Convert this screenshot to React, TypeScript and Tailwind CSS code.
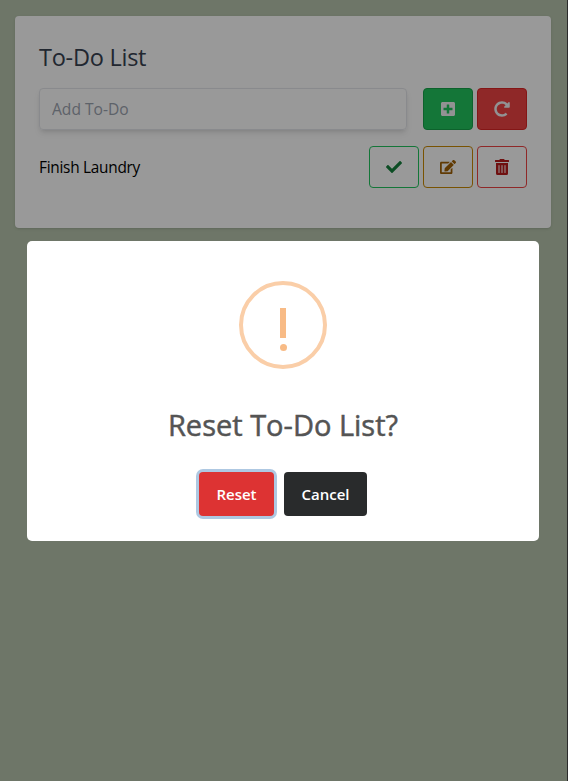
import React from "react";
import { FaPlusSquare, FaCheck, FaEdit, FaRedoAlt, FaTrashAlt } from "react-icons/fa";

function IconButton({ className, children }: { className: string; children: React.ReactNode }) {
  return (
    <button className={`flex h-[42px] w-[50px] shrink-0 items-center justify-center rounded border ${className}`}>
      {children}
    </button>
  );
}

export default function App() {
  return (
    <div className="relative h-[781px] w-[568px] overflow-hidden border-r border-[#2b2b2b] bg-[#b7c5ad] font-['Open_Sans','Noto_Sans',sans-serif]">
      <main className="pl-[15px] pt-4">
        <section className="h-[212px] w-[536px] rounded bg-white px-6 pt-[23px] shadow">
          <h1 className="h-9 text-[23.5px] leading-9 tracking-[-0.25px] text-[#374151]">To-Do List</h1>
          <div className="mt-[13px] flex gap-1">
            <input
              placeholder="Add To-Do"
              className="mr-3 h-[42px] w-[368px] rounded border border-gray-200 px-3 text-[15.6px] shadow-md placeholder:text-[#9ca3af]"
            />
            <IconButton className="border-[#16a34a] bg-[#22c55e] text-gray-100">
              <FaPlusSquare size={16} />
            </IconButton>
            <IconButton className="border-[#dc2626] bg-[#ef4444] text-gray-100">
              <FaRedoAlt size={16} />
            </IconButton>
          </div>
          <div className="mt-4 flex items-center gap-1">
            <span className="mr-auto pt-[2px] text-[15.4px] tracking-[-0.27px] text-black">Finish Laundry</span>
            <IconButton className="border-[#22c55e] text-[#15803d]">
              <FaCheck size={16} />
            </IconButton>
            <IconButton className="border-[#ca8a04] text-[#a16207]">
              <FaEdit size={16} />
            </IconButton>
            <IconButton className="border-[#ef4444] text-[#b91c1c]">
              <FaTrashAlt size={16} />
            </IconButton>
          </div>
        </section>
      </main>
      <div className="absolute -right-px bottom-0 left-0 top-0 bg-black/40 pl-[27px] pt-[241px]">
        <div role="dialog" className="flex h-[300px] w-[512px] flex-col items-center rounded-[5px] bg-white pt-10">
          <div className="flex size-[88px] flex-col items-center rounded-full border-4 border-[#facea8] pt-[23px]">
            <span className="h-[30px] w-[6px] bg-[#f8bb86]" />
            <span className="mt-[6px] size-[7px] rounded-full bg-[#f8bb86]" />
          </div>
          <h2 className="mt-[33px] h-[46px] text-[29px] font-medium leading-[45px] text-[#545454] [-webkit-text-stroke:0.5px_#545454]">
            Reset To-Do List?
          </h2>
          <div className="mt-6 flex gap-[10px]">
            <button className="h-[44px] w-[75px] rounded bg-[#dd3333] text-[15px] font-semibold text-white ring-[3px] ring-[#aec8e2]">
              Reset
            </button>
            <button className="h-[44px] w-[83px] rounded bg-[#292b2c] text-[15px] font-semibold text-white">
              Cancel
            </button>
          </div>
        </div>
      </div>
    </div>
  );
}
